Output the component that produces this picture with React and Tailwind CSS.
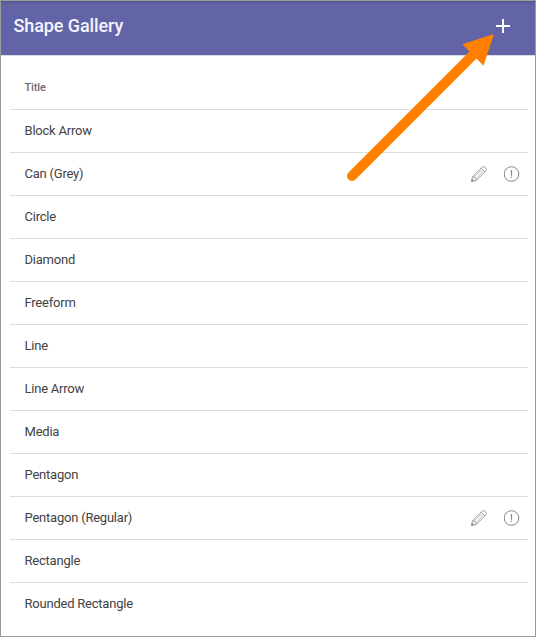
const shapes = [
  { name: "Block Arrow" },
  { name: "Can (Grey)", custom: true },
  { name: "Circle" },
  { name: "Diamond" },
  { name: "Freeform" },
  { name: "Line" },
  { name: "Line Arrow" },
  { name: "Media" },
  { name: "Pentagon" },
  { name: "Pentagon (Regular)", custom: true },
  { name: "Rectangle" },
  { name: "Rounded Rectangle" },
];

function PlusIcon() {
  return (
    <svg width="14" height="14" viewBox="0 0 14 14" aria-hidden="true">
      <path d="M7 0V14M0 7H14" stroke="#fff" strokeWidth="2" />
    </svg>
  );
}

function PencilIcon() {
  return (
    <svg width="16" height="16" viewBox="0 0 16 16" fill="none" stroke="#8c8c8c" strokeWidth="0.85" strokeLinejoin="round" aria-hidden="true">
      <path d="M0.6 15.4L1.5 10.7L11.2 1.1Q12.6 -0.1 14 1.1L14.9 2Q16.1 3.4 14.9 4.8L5.3 14.5Z" />
      <path d="M1.5 10.7L3.4 11L3.7 12.3L5 12.6L5.3 14.5M10.1 2.2L13.8 5.9" />
      <path d="M3.4 11L10.8 3.6M5 12.6L12.4 5.2" strokeWidth="0.65" />
      <path d="M0.7 15.3L1.1 13.4L2.6 14.9Z" fill="#858585" />
    </svg>
  );
}

function AlertIcon() {
  return (
    <svg width="16" height="16" viewBox="0 0 16 16" fill="none" stroke="#858585" aria-hidden="true">
      <circle cx="7.5" cy="8" r="7.3" strokeWidth="1" />
      <path d="M7.5 4V9.7M7.5 10.8V12.1" strokeWidth="1.2" />
    </svg>
  );
}

export default function App() {
  return (
    <div className="relative flex h-[637px] w-[536px] flex-col overflow-hidden border border-[#9b9b9b] bg-white font-['Roboto',sans-serif] text-[13px] tracking-[-0.22px] text-[#424242]">
      <header className="flex h-[55px] shrink-0 items-center justify-between border-b border-[#dddde6] bg-[linear-gradient(#55568f,#6264a7_4px)] pr-[25px] pb-1 pl-[12.5px] text-[#f4f4fa]">
        <h1 className="text-[18px] leading-6 font-medium tracking-[-0.1px]">Shape Gallery</h1>
        <button aria-label="Add shape" className="block">
          <PlusIcon />
        </button>
      </header>
      <main className="mr-[7px] ml-[9px]">
        <div className="flex h-[54px] items-center border-b border-[#dcdcdc] pt-[11px] pl-[14.5px] text-[11px] font-medium tracking-[-0.1px] text-[#6c6c6c]">
          Title
        </div>
        <ul>
          {shapes.map(({ name, custom }) => (
            <li key={name} className="flex h-[43px] items-center justify-between border-b border-[#dcdcdc] pr-2 pl-[14.5px] last:border-transparent">
              <span>{name}</span>
              {custom && (
                <span className="flex gap-[17px]">
                  <PencilIcon />
                  <AlertIcon />
                </span>
              )}
            </li>
          ))}
        </ul>
      </main>
      <svg className="pointer-events-none absolute -top-px -left-px" width="536" height="637" viewBox="0 0 536 637" aria-hidden="true">
        <path d="M352 176L474 54" stroke="#ff8000" strokeWidth="10" strokeLinecap="round" />
        <path d="M494 34L462.3 44.3L483.5 65.7Z" fill="#ff8000" />
      </svg>
    </div>
  );
}
